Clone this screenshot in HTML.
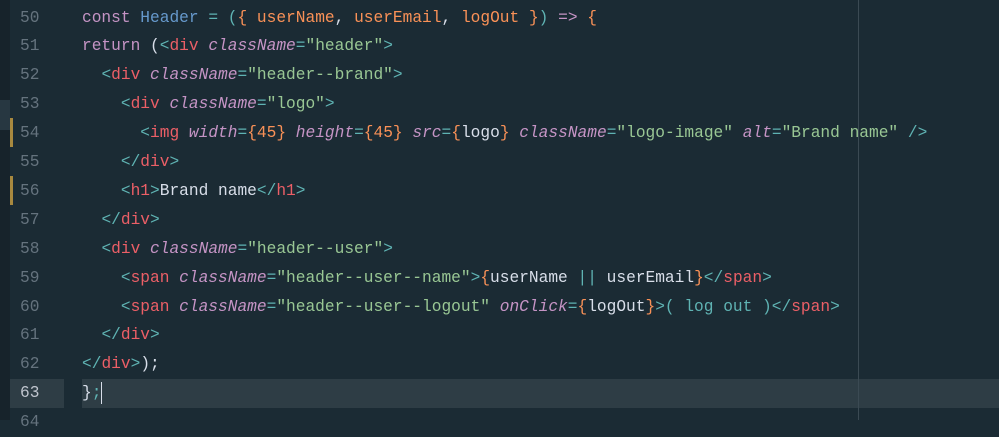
<!DOCTYPE html>
<html><head><meta charset="utf-8"><style>
body{margin:0;width:999px;height:420px;overflow:hidden;background:#1b2b34;font-family:"Liberation Mono",monospace;font-size:16.2px;position:relative}
.strip{position:absolute;left:0;top:0;width:10px;height:420px;background:#17232b}
.sb{position:absolute;left:0;top:100px;width:10px;height:30px;background:#273741}
.ruler{position:absolute;left:858px;top:0;width:1px;height:420px;background:#3b4a53}
.mk{position:absolute;left:10px;width:3px;background:#a8893f}
.hl{position:absolute;top:379px;height:29px;background:#2e3d45}
.ln{position:absolute;left:20px;width:40px;color:#65737e;height:28.9px;line-height:28.9px}
.code{position:absolute;left:82px;top:3.5px;white-space:pre;color:#d8dee9;line-height:28.9px}
.k{color:#c594c5}.b{color:#6699cc}.p{color:#5fb3b3}.o{color:#f99157}.t{color:#ec5f67}.a{color:#c594c5;font-style:italic}.s{color:#99c794}
.cur{display:inline-block;width:1px;height:22px;background:#d8dee9;vertical-align:middle}
</style></head><body>
<div class="strip"></div><div class="sb"></div>
<div class="hl" style="left:10px;width:54px"></div>
<div class="hl" style="left:82px;width:917px"></div>
<div class="ruler"></div>
<div class="mk" style="top:118px;height:29px"></div>
<div class="mk" style="top:176px;height:29px"></div>
<div class="ln" style="top:3.5px">50</div>
<div class="ln" style="top:32.4px">51</div>
<div class="ln" style="top:61.3px">52</div>
<div class="ln" style="top:90.2px">53</div>
<div class="ln" style="top:119.1px">54</div>
<div class="ln" style="top:148px">55</div>
<div class="ln" style="top:176.9px">56</div>
<div class="ln" style="top:205.8px">57</div>
<div class="ln" style="top:234.7px">58</div>
<div class="ln" style="top:263.6px">59</div>
<div class="ln" style="top:292.5px">60</div>
<div class="ln" style="top:321.4px">61</div>
<div class="ln" style="top:350.3px">62</div>
<div class="ln" style="top:379.2px;color:#c0c5ce">63</div>
<div class="ln" style="top:408.1px">64</div>
<div class="code"><span class="k">const</span> <span class="b">Header</span> <span class="p">=</span> <span class="p">(</span><span class="o">{</span> <span class="o">userName</span>, <span class="o">userEmail</span>, <span class="o">logOut</span> <span class="o">}</span><span class="p">)</span> <span class="k">=&gt;</span> <span class="o">{</span>
<span class="k">return</span> (<span class="p">&lt;</span><span class="t">div</span> <span class="a">className</span><span class="p">=</span><span class="s">"header"</span><span class="p">&gt;</span>
  <span class="p">&lt;</span><span class="t">div</span> <span class="a">className</span><span class="p">=</span><span class="s">"header--brand"</span><span class="p">&gt;</span>
    <span class="p">&lt;</span><span class="t">div</span> <span class="a">className</span><span class="p">=</span><span class="s">"logo"</span><span class="p">&gt;</span>
      <span class="p">&lt;</span><span class="t">img</span> <span class="a">width</span><span class="p">=</span><span class="o">{45}</span> <span class="a">height</span><span class="p">=</span><span class="o">{45}</span> <span class="a">src</span><span class="p">=</span><span class="o">{</span>logo<span class="o">}</span> <span class="a">className</span><span class="p">=</span><span class="s">"logo-image"</span> <span class="a">alt</span><span class="p">=</span><span class="s">"Brand name"</span> <span class="p">/&gt;</span>
    <span class="p">&lt;/</span><span class="t">div</span><span class="p">&gt;</span>
    <span class="p">&lt;</span><span class="t">h1</span><span class="p">&gt;</span>Brand name<span class="p">&lt;/</span><span class="t">h1</span><span class="p">&gt;</span>
  <span class="p">&lt;/</span><span class="t">div</span><span class="p">&gt;</span>
  <span class="p">&lt;</span><span class="t">div</span> <span class="a">className</span><span class="p">=</span><span class="s">"header--user"</span><span class="p">&gt;</span>
    <span class="p">&lt;</span><span class="t">span</span> <span class="a">className</span><span class="p">=</span><span class="s">"header--user--name"</span><span class="p">&gt;</span><span class="o">{</span>userName <span class="p">||</span> userEmail<span class="o">}</span><span class="p">&lt;/</span><span class="t">span</span><span class="p">&gt;</span>
    <span class="p">&lt;</span><span class="t">span</span> <span class="a">className</span><span class="p">=</span><span class="s">"header--user--logout"</span> <span class="a">onClick</span><span class="p">=</span><span class="o">{</span>logOut<span class="o">}</span><span class="p">&gt;( log out )&lt;/</span><span class="t">span</span><span class="p">&gt;</span>
  <span class="p">&lt;/</span><span class="t">div</span><span class="p">&gt;</span>
<span class="p">&lt;/</span><span class="t">div</span><span class="p">&gt;</span>);
}<span class="p">;</span><span class="cur"></span></div>
</body></html>
